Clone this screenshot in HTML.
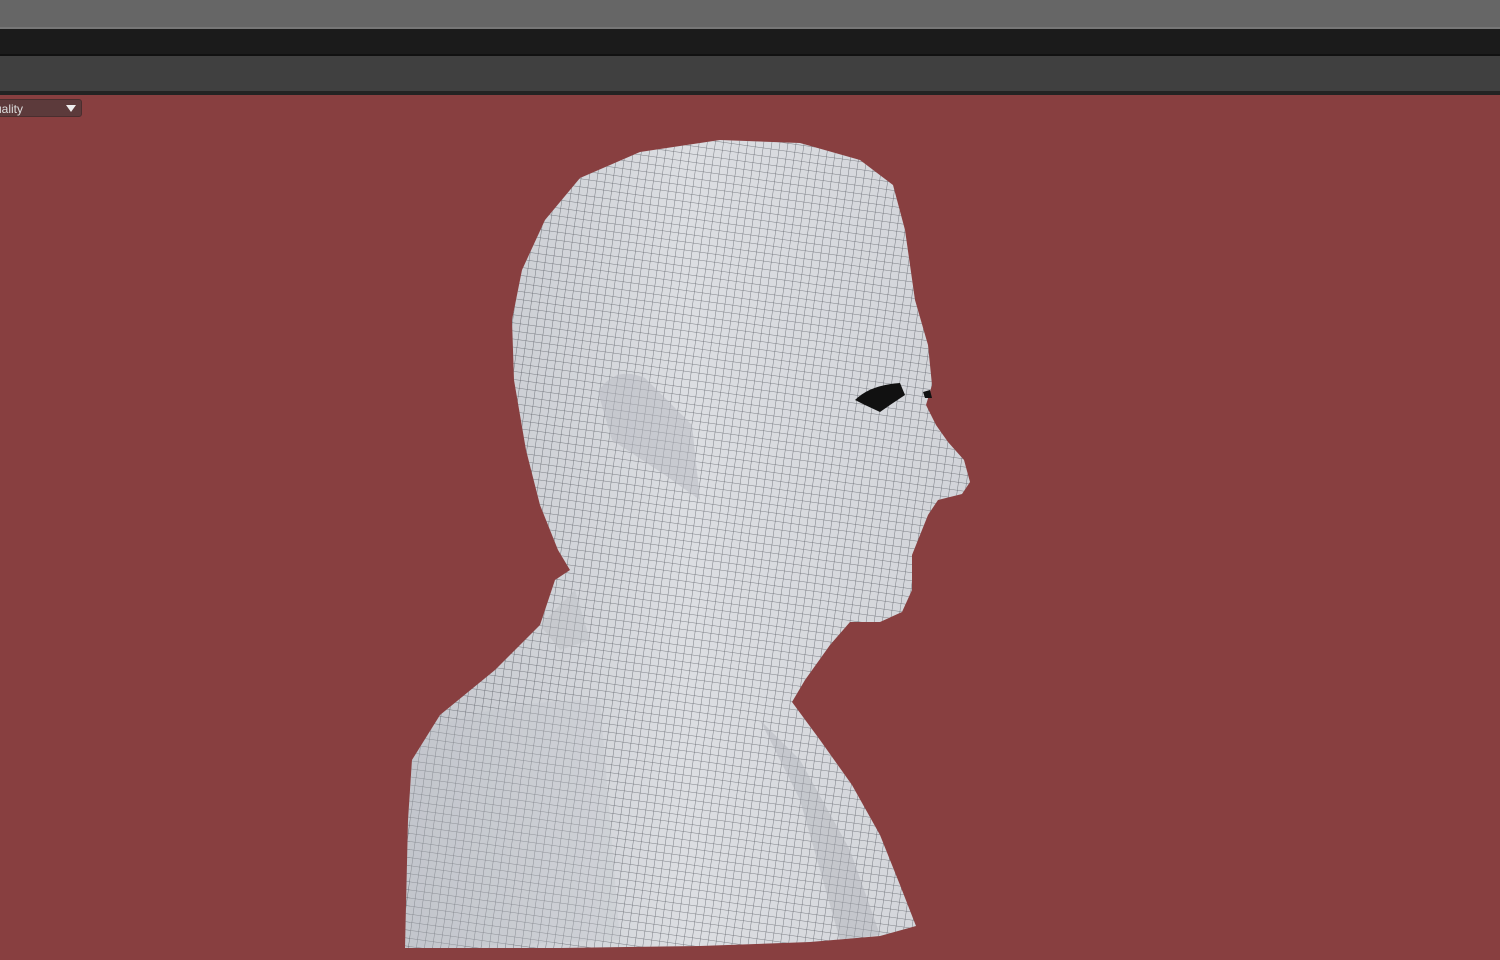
<!DOCTYPE html>
<html><head><meta charset="utf-8"><style>
html,body{margin:0;padding:0;width:1500px;height:960px;overflow:hidden;background:#883f40;font-family:"Liberation Sans",sans-serif}
.b1{position:absolute;left:0;top:0;width:1500px;height:27px;background:#666}
.b1l{position:absolute;left:0;top:27px;width:1500px;height:2px;background:#777}
.b2{position:absolute;left:0;top:29px;width:1500px;height:25px;background:#1b1b1b}
.b2l{position:absolute;left:0;top:54px;width:1500px;height:2px;background:#111}
.b3{position:absolute;left:0;top:56px;width:1500px;height:35px;background:#404040}
.b3l{position:absolute;left:0;top:91px;width:1500px;height:4px;background:#232323}
.dd{position:absolute;left:-6px;top:99px;width:88px;height:18px;background:#5c3a3b;border:1px solid #4a2e2f;border-radius:3px;color:#ddd;font-size:12px;line-height:18px;box-sizing:border-box}
.dd span{position:absolute;left:0;top:0}
.tri{position:absolute;right:5px;top:5px;width:0;height:0;border-left:5px solid transparent;border-right:5px solid transparent;border-top:7px solid #eee}
svg{position:absolute;left:0;top:0}
</style></head><body>
<div class="b1"></div><div class="b1l"></div><div class="b2"></div><div class="b2l"></div><div class="b3"></div><div class="b3l"></div>
<div class="dd"><span>uality</span><div class="tri"></div></div>
<svg width="1500" height="960" viewBox="0 0 1500 960">
<defs>
<pattern id="g" width="8" height="8" patternUnits="userSpaceOnUse" patternTransform="rotate(8)">
<path d="M0 0H8M0 0V8" stroke="#3c3f47" stroke-width="0.8" fill="none" opacity="0.75"/>
</pattern>
<linearGradient id="sh" x1="0" y1="0" x2="1" y2="0">
<stop offset="0" stop-color="#c4c7cd"/><stop offset="0.5" stop-color="#dcdee2"/><stop offset="1" stop-color="#d2d4d9"/>
</linearGradient>
<clipPath id="c"><path id="p" d="M405 948 L408 820 L412 760 L440 715 L495 670 L540 625 L555 580 L570 570 L558 550 L540 505 L526 450 L514 380 L512 320 L522 270 L545 220 L580 178 L640 152 L720 140 L800 143 L860 160 L893 185 L905 230 L915 300 L928 345 L932 385 L926 405 L936 425 L948 442 L964 460 L970 482 L962 494 L938 500 L928 515 L920 535 L912 555 L912 590 L902 612 L880 622 L850 622 L830 645 L805 680 L792 702 L820 740 L852 785 L880 835 L900 885 L916 926 L880 936 L810 942 L700 946 L560 948 Z"/></clipPath>
</defs>
<use href="#p" fill="url(#sh)"/>
<g clip-path="url(#c)">
<rect x="380" y="120" width="620" height="840" fill="url(#g)"/>
<path d="M598 392 Q615 365 645 378 L692 425 L700 500 L665 475 L612 440 Z" fill="#b5b8bf" opacity="0.5"/>
<path d="M410 740 Q480 700 600 700 L620 940 L410 948Z" fill="#c0c3c9" opacity="0.3"/>
<path d="M760 720 L800 760 L850 850 L880 935 L840 940 L800 800Z" fill="#a9acb3" opacity="0.4"/>
<path d="M540 625 L575 590 L590 640 L560 650Z" fill="#b8bbc1" opacity="0.4"/>
</g>
<path d="M855 400 Q870 385 900 383 L905 395 L890 405 L880 412 L865 405 Z" fill="#111"/>
<path d="M923 392 L930 390 L932 398 L925 398Z" fill="#111"/>
</svg>
</body></html>
